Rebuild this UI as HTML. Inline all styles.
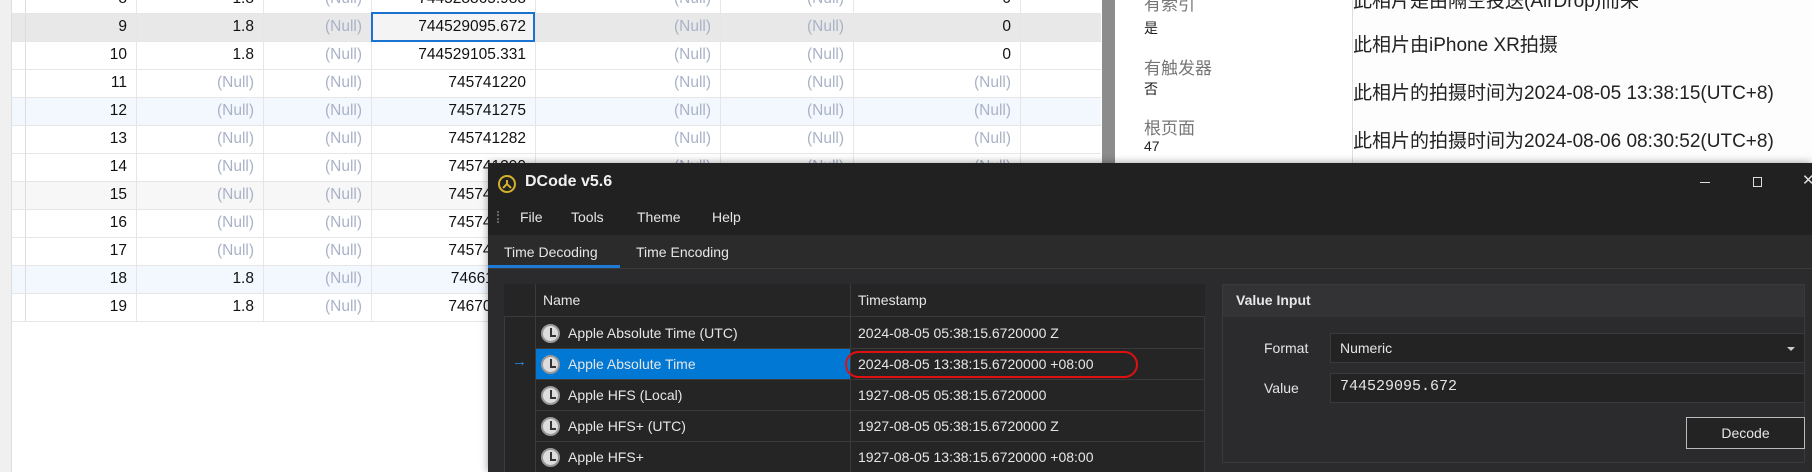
<!DOCTYPE html>
<html><head><meta charset="utf-8"><style>
*{margin:0;padding:0;box-sizing:border-box}
html,body{width:1812px;height:472px;overflow:hidden}
body{position:relative;background:#fff;font-family:"Liberation Sans","Noto Sans CJK SC",sans-serif}
.a{position:absolute}
.cell{position:absolute;height:28px;line-height:28px;font-size:15.5px;text-align:right;padding-right:9px;color:#111;white-space:nowrap;overflow:hidden}
.n{color:#aab2c8}
.vl{position:absolute;top:0;width:1px;height:321px;background:#e6e6e6}
.hl{position:absolute;left:11px;width:1090px;height:1px;background:#e6e6e6}
.w{color:#e6e6e6;font-size:14px}
.clock{position:absolute;width:19px;height:19px;border-radius:50%;background:#ddd;border:2px solid #999}
.clock:after{content:"";position:absolute;left:7px;top:2px;width:4px;height:7px;border-left:2px solid #333;border-bottom:2px solid #333}
</style></head><body>
<div class="a" style="left:0;top:0;width:11px;height:472px;background:#f0f0f0"></div>
<div class="a" style="left:11px;top:13px;width:1090px;height:28px;background:#e8e8e8"></div>
<div class="a" style="left:11px;top:97px;width:1090px;height:28px;background:#f2f8fd"></div>
<div class="a" style="left:11px;top:181px;width:1090px;height:28px;background:#f7f7f7"></div>
<div class="a" style="left:11px;top:265px;width:1090px;height:28px;background:#f2f8fd"></div>
<div class="vl" style="left:11px;height:472px;background:#ddd"></div>
<div class="vl" style="left:25px;background:#ddd"></div>
<div class="vl" style="left:136px"></div><div class="vl" style="left:263px"></div><div class="vl" style="left:371px"></div><div class="vl" style="left:535px"></div><div class="vl" style="left:720px"></div><div class="vl" style="left:853px"></div><div class="vl" style="left:1020px"></div>
<div class="hl" style="top:13px"></div><div class="hl" style="top:41px"></div><div class="hl" style="top:69px"></div><div class="hl" style="top:97px"></div><div class="hl" style="top:125px"></div><div class="hl" style="top:153px"></div><div class="hl" style="top:181px"></div><div class="hl" style="top:209px"></div><div class="hl" style="top:237px"></div><div class="hl" style="top:265px"></div><div class="hl" style="top:293px"></div><div class="hl" style="top:321px"></div>
<div id="rows"></div>
<div class="a" style="left:371px;top:12px;width:164px;height:30px;border:2px solid #1a73d0;background:#f4f4f4"></div>
<div class="cell" style="left:371px;top:13px;width:164px">744529095.672</div>
<script>
var R=[[-15,"8","1.8",0,"744528865.988",0,0,"0"],[13,"9","1.8",0,"",0,0,"0"],[41,"10","1.8",0,"744529105.331",0,0,"0"],[69,"11",0,0,"745741220",0,0,0],[97,"12",0,0,"745741275",0,0,0],[125,"13",0,0,"745741282",0,0,0],[153,"14",0,0,"745741290",0,0,0],[181,"15",0,0,"745741295",0,0,0],[209,"16",0,0,"745741300",0,0,0],[237,"17",0,0,"745741310",0,0,0],[265,"18","1.8",0,"746611183",0,0,0],[293,"19","1.8",0,"746704920",0,0,0]];
var C=[[25,111],[136,127],[263,108],[371,164],[535,185],[720,133],[853,167]];var h="";
R.forEach(function(r){for(var i=0;i<7;i++){var v=r[i+1];if(v==="")continue;h+='<div class="cell'+(v===0?' n':'')+'" style="left:'+C[i][0]+'px;top:'+r[0]+'px;width:'+C[i][1]+'px">'+(v===0?'(Null)':v)+'</div>';}});
document.getElementById("rows").innerHTML=h;
</script>
<div class="a" style="left:1102px;top:0;width:13px;height:472px;background:#8c8c8c"></div>
<div class="a" style="left:1115px;top:0;width:238px;height:472px;background:#fff;border-right:1px solid #ddd"></div>
<div class="a" style="left:1144px;top:-6px;font-size:17px;color:#777;line-height:22px">有索引</div>
<div class="a" style="left:1144px;top:18px;font-size:14px;color:#222">是</div>
<div class="a" style="left:1144px;top:54px;font-size:17px;color:#777">有触发器</div>
<div class="a" style="left:1144px;top:79px;font-size:14px;color:#222">否</div>
<div class="a" style="left:1144px;top:114px;font-size:17px;color:#777">根页面</div>
<div class="a" style="left:1144px;top:138px;font-size:14px;color:#222">47</div>
<div class="a" style="left:1354px;top:0;width:458px;height:472px;background:#fdfdfd"></div>
<div class="a" style="left:1353px;top:-14px;font-size:19px;color:#222;white-space:nowrap">此相片是由隔空投送(AirDrop)而来</div>
<div class="a" style="left:1353px;top:30px;font-size:19px;color:#222;white-space:nowrap">此相片由iPhone XR拍摄</div>
<div class="a" style="left:1353px;top:78px;font-size:19px;color:#222;white-space:nowrap">此相片的拍摄时间为2024-08-05 13:38:15(UTC+8)</div>
<div class="a" style="left:1353px;top:126px;font-size:19px;color:#222;white-space:nowrap">此相片的拍摄时间为2024-08-06 08:30:52(UTC+8)</div>
<div class="a" style="left:488px;top:163px;width:1324px;height:309px;background:#2b2b2d;box-shadow:0 0 8px rgba(0,0,0,.4);overflow:hidden">
<div class="a" style="left:0;top:0;width:1324px;height:72px;background:#212121"></div>
<div class="a" style="left:10px;top:12px;width:18px;height:18px;border-radius:50%;border:2px solid #d4b12a"></div>
<svg class="a" style="left:10px;top:12px" width="18" height="18"><path d="M9 5V9L5 13M9 9L13 13" stroke="#d4b12a" stroke-width="2" fill="none"/></svg>
<div class="a" style="left:37px;top:10px;color:#f0f0f0;font-weight:bold;font-size:16px">DCode v5.6</div>
<div class="a" style="left:1212px;top:19px;width:10px;height:1px;background:#ddd"></div>
<div class="a" style="left:1265px;top:14px;width:9px;height:10px;border:1px solid #ddd"></div>
<div class="a" style="left:1314px;top:8px;color:#ddd;font-size:15px">✕</div>
<div class="a" style="left:9px;top:48px;width:2px;height:12px;border-left:2px dotted #666"></div>
<div class="a w" style="left:32px;top:46px">File</div>
<div class="a w" style="left:83px;top:46px">Tools</div>
<div class="a w" style="left:149px;top:46px">Theme</div>
<div class="a w" style="left:224px;top:46px">Help</div>
<div class="a" style="left:0;top:72px;width:1324px;height:34px;background:#2b2b2b;border-bottom:1px solid #3a3a3a"></div>
<div class="a w" style="left:16px;top:81px">Time Decoding</div>
<div class="a w" style="left:148px;top:81px">Time Encoding</div>
<div class="a" style="left:0;top:102px;width:132px;height:3px;background:#1e7ad4"></div>
<div class="a" style="left:16px;top:121px;width:701px;height:240px;background:#252526;border:1px solid #3a3a3a"></div>
<div class="a" style="left:16px;top:121px;width:701px;height:33px;background:#252526;border-bottom:1px solid #3a3a3a"></div>
<div class="a" style="left:47px;top:121px;width:1px;height:240px;background:#3a3a3a"></div>
<div class="a" style="left:362px;top:121px;width:1px;height:240px;background:#3a3a3a"></div>
<div class="a w" style="left:55px;top:129px">Name</div>
<div class="a w" style="left:370px;top:129px">Timestamp</div>
<div class="a" style="left:48px;top:186px;width:314px;height:31px;background:#0078d4"></div>
<div class="a" style="left:24px;top:190px;color:#2a8ee0;font-size:15px">→</div>
<div id="g"></div>
<script>
var T=[["Apple Absolute Time (UTC)","2024-08-05 05:38:15.6720000 Z"],["Apple Absolute Time","2024-08-05 13:38:15.6720000 +08:00"],["Apple HFS (Local)","1927-08-05 05:38:15.6720000"],["Apple HFS+ (UTC)","1927-08-05 05:38:15.6720000 Z"],["Apple HFS+","1927-08-05 13:38:15.6720000 +08:00"]];var g="";
T.forEach(function(t,i){var y=155+i*31;g+='<div class="a" style="left:48px;top:'+(y+30)+'px;width:668px;height:1px;background:#3a3a3a"></div><div class="clock" style="left:53px;top:'+(y+6)+'px"></div><div class="a w" style="left:80px;top:'+(y+7)+'px">'+t[0]+'</div><div class="a w" style="left:370px;top:'+(y+7)+'px">'+t[1]+'</div>';});
document.getElementById("g").innerHTML=g;
</script>
<div class="a" style="left:357px;top:188px;width:293px;height:27px;border:2px solid #e01010;border-radius:14px"></div>
<div class="a" style="left:734px;top:121px;width:583px;height:179px;border:1px solid #3a3a3a;background:#2b2b2d"></div>
<div class="a" style="left:735px;top:122px;width:581px;height:32px;background:#333336"></div>
<div class="a" style="left:748px;top:129px;color:#e6e6e6;font-weight:bold;font-size:14px">Value Input</div>
<div class="a w" style="left:776px;top:177px">Format</div>
<div class="a w" style="left:776px;top:217px">Value</div>
<div class="a" style="left:842px;top:170px;width:475px;height:30px;background:#232323;border:1px solid #3a3a3a"></div>
<div class="a w" style="left:852px;top:177px">Numeric</div>
<div class="a" style="left:1299px;top:184px;border:4px solid transparent;border-top:4px solid #ccc"></div>
<div class="a" style="left:842px;top:210px;width:475px;height:30px;background:#232323;border:1px solid #3a3a3a"></div>
<div class="a" style="left:852px;top:215px;color:#e6e6e6;font-size:15px;font-family:'Liberation Mono',monospace">744529095.672</div>
<div class="a" style="left:1198px;top:254px;width:119px;height:32px;background:#232323;border:1px solid #bbb;color:#e6e6e6;font-size:14px;text-align:center;line-height:30px">Decode</div>
</div>
</body></html>
